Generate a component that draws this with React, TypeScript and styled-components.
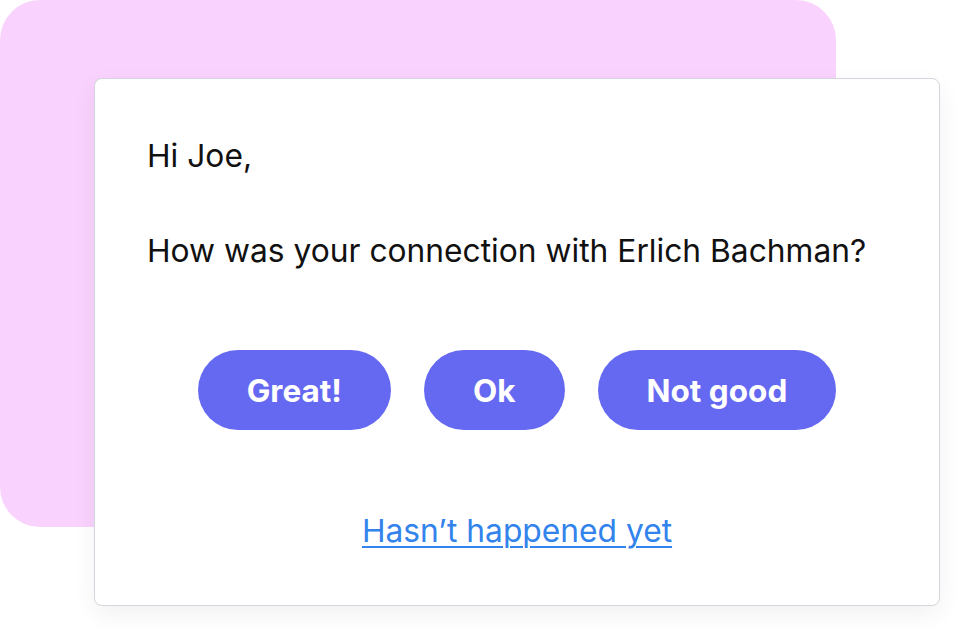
import * as React from 'react';
import styled, { createGlobalStyle } from 'styled-components';

const GlobalStyle = createGlobalStyle`
  html, body {
    margin: 0;
    padding: 0;
    background: #ffffff;
    font-family: Inter, "Noto Sans", sans-serif;
  }
`;

const Stage = styled.div`
  position: relative;
  width: 956px;
  height: 630px;
  overflow: hidden;
`;

// pink backdrop sitting behind the card
const Backdrop = styled.div`
  position: absolute;
  left: 0;
  top: 0;
  width: 836px;
  height: 527px;
  border-radius: 40px;
  background: #f9d3fd;
`;

const Card = styled.div`
  position: absolute;
  left: 94px;
  top: 78px;
  width: 846px;
  height: 528px;
  box-sizing: border-box;
  background: #ffffff;
  border: 1px solid #d3d6dc;
  border-radius: 8px;
  box-shadow: 0 8px 24px rgba(15, 23, 42, 0.06);
  padding: 57px 52px 0 52px;
  display: flex;
  flex-direction: column;
`;

const Line = styled.p`
  margin: 0;
  font-size: 31.75px;
  line-height: 40px;
  color: #111111;
  white-space: nowrap;
`;

const Question = styled(Line)`
  margin-top: 55px;
`;

const Choices = styled.div`
  display: flex;
  justify-content: center;
  gap: 33px;
  margin: 79px -52px 0;
`;

const Choice = styled.button`
  height: 80px;
  padding: 0 49px;
  border: none;
  border-radius: 40px;
  background: #6569f2;
  color: #ffffff;
  font-family: Inter, "Noto Sans", sans-serif;
  font-size: 31.5px;
  font-weight: 700;
  cursor: pointer;
`;

const Later = styled.a`
  align-self: center;
  margin: 81px -52px 0;
  font-size: 31.75px;
  line-height: 40px;
  color: #3283ec;
  text-decoration: underline;
  text-underline-offset: 4px;
  text-decoration-thickness: 2px;
`;

export default function App() {
  return (
    <Stage>
      <GlobalStyle />
      <Backdrop />
      <Card>
        <Line>Hi Joe,</Line>
        <Question>How was your connection with Erlich Bachman?</Question>
        <Choices>
          <Choice>Great!</Choice>
          <Choice>Ok</Choice>
          <Choice>Not good</Choice>
        </Choices>
        <Later href="#">Hasn’t happened yet</Later>
      </Card>
    </Stage>
  );
}
